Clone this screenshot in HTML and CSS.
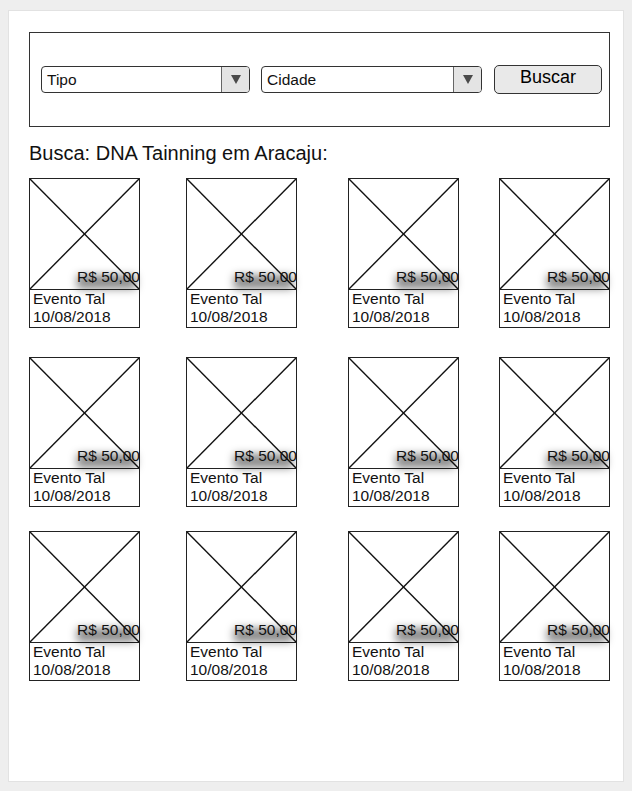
FILE: index.html
```html
<!DOCTYPE html>
<html lang="pt-BR">
<head>
<meta charset="utf-8">
<title>Busca de eventos</title>
<link rel="stylesheet" href="styles.css">
</head>
<body>
<div class="panel">
  <div class="searchbar">
    <div class="select select-tipo"><span class="select-label">Tipo</span><span class="select-arrow"><svg viewBox="0 0 10 9" width="10" height="9"><polygon points="0,0 10,0 5,9"/></svg></span></div>
    <div class="select select-cidade"><span class="select-label">Cidade</span><span class="select-arrow"><svg viewBox="0 0 10 9" width="10" height="9"><polygon points="0,0 10,0 5,9"/></svg></span></div>
    <button class="btn">Buscar</button>
  </div>
  <h1 class="title">Busca: DNA Tainning em Aracaju:</h1>
  <div class="grid">
    <div class="card"><div class="thumb"><svg class="x" viewBox="0 0 100 100" preserveAspectRatio="none"><line x1="0" y1="0" x2="100" y2="100"/><line x1="100" y1="0" x2="0" y2="100"/></svg><span class="price">R$ 50,00</span></div><div class="caption">Evento Tal<br>10/08/2018</div></div>
    <div class="card"><div class="thumb"><svg class="x" viewBox="0 0 100 100" preserveAspectRatio="none"><line x1="0" y1="0" x2="100" y2="100"/><line x1="100" y1="0" x2="0" y2="100"/></svg><span class="price">R$ 50,00</span></div><div class="caption">Evento Tal<br>10/08/2018</div></div>
    <div class="card"><div class="thumb"><svg class="x" viewBox="0 0 100 100" preserveAspectRatio="none"><line x1="0" y1="0" x2="100" y2="100"/><line x1="100" y1="0" x2="0" y2="100"/></svg><span class="price">R$ 50,00</span></div><div class="caption">Evento Tal<br>10/08/2018</div></div>
    <div class="card"><div class="thumb"><svg class="x" viewBox="0 0 100 100" preserveAspectRatio="none"><line x1="0" y1="0" x2="100" y2="100"/><line x1="100" y1="0" x2="0" y2="100"/></svg><span class="price">R$ 50,00</span></div><div class="caption">Evento Tal<br>10/08/2018</div></div>
    <div class="card"><div class="thumb"><svg class="x" viewBox="0 0 100 100" preserveAspectRatio="none"><line x1="0" y1="0" x2="100" y2="100"/><line x1="100" y1="0" x2="0" y2="100"/></svg><span class="price">R$ 50,00</span></div><div class="caption">Evento Tal<br>10/08/2018</div></div>
    <div class="card"><div class="thumb"><svg class="x" viewBox="0 0 100 100" preserveAspectRatio="none"><line x1="0" y1="0" x2="100" y2="100"/><line x1="100" y1="0" x2="0" y2="100"/></svg><span class="price">R$ 50,00</span></div><div class="caption">Evento Tal<br>10/08/2018</div></div>
    <div class="card"><div class="thumb"><svg class="x" viewBox="0 0 100 100" preserveAspectRatio="none"><line x1="0" y1="0" x2="100" y2="100"/><line x1="100" y1="0" x2="0" y2="100"/></svg><span class="price">R$ 50,00</span></div><div class="caption">Evento Tal<br>10/08/2018</div></div>
    <div class="card"><div class="thumb"><svg class="x" viewBox="0 0 100 100" preserveAspectRatio="none"><line x1="0" y1="0" x2="100" y2="100"/><line x1="100" y1="0" x2="0" y2="100"/></svg><span class="price">R$ 50,00</span></div><div class="caption">Evento Tal<br>10/08/2018</div></div>
    <div class="card"><div class="thumb"><svg class="x" viewBox="0 0 100 100" preserveAspectRatio="none"><line x1="0" y1="0" x2="100" y2="100"/><line x1="100" y1="0" x2="0" y2="100"/></svg><span class="price">R$ 50,00</span></div><div class="caption">Evento Tal<br>10/08/2018</div></div>
    <div class="card"><div class="thumb"><svg class="x" viewBox="0 0 100 100" preserveAspectRatio="none"><line x1="0" y1="0" x2="100" y2="100"/><line x1="100" y1="0" x2="0" y2="100"/></svg><span class="price">R$ 50,00</span></div><div class="caption">Evento Tal<br>10/08/2018</div></div>
    <div class="card"><div class="thumb"><svg class="x" viewBox="0 0 100 100" preserveAspectRatio="none"><line x1="0" y1="0" x2="100" y2="100"/><line x1="100" y1="0" x2="0" y2="100"/></svg><span class="price">R$ 50,00</span></div><div class="caption">Evento Tal<br>10/08/2018</div></div>
    <div class="card"><div class="thumb"><svg class="x" viewBox="0 0 100 100" preserveAspectRatio="none"><line x1="0" y1="0" x2="100" y2="100"/><line x1="100" y1="0" x2="0" y2="100"/></svg><span class="price">R$ 50,00</span></div><div class="caption">Evento Tal<br>10/08/2018</div></div>
  </div>
</div>
</body>
</html>
```

FILE: styles.css
```css
* { box-sizing: border-box; }
html, body { margin: 0; padding: 0; }
body {
  background: #eeeeee;
  font-family: "Liberation Sans", Arial, sans-serif;
  color: #111;
}
.panel {
  margin: 10px 8px 0 8px;
  height: 772px;
  background: #fff;
  border: 1px solid #e2e2e2;
  padding: 21px 14px 0 20px;
}
.searchbar {
  width: 581px;
  height: 95px;
  border: 1px solid #333;
  display: flex;
  align-items: center;
  padding: 0 0 0 11px;
}
.select {
  height: 27px;
  border: 1px solid #333;
  border-radius: 4px;
  display: flex;
  overflow: hidden;
  background: #fff;
}
.select-tipo { width: 209px; margin-right: 11px; }
.select-cidade { width: 221px; margin-right: 12px; }
.select-label {
  flex: 1;
  font-size: 15.5px;
  line-height: 25px;
  padding-left: 5px;
  color: #111;
}
.select-arrow {
  width: 28px;
  background: #e4e4e4;
  border-left: 1px solid #666;
  display: flex;
  align-items: center;
  justify-content: center;
}
.select-arrow svg { display: block; fill: #4a4a4a; }
.btn {
  width: 108px;
  height: 29px;
  border: 1px solid #333;
  border-radius: 5px;
  background: #e9e9e9;
  font-family: "Liberation Sans", Arial, sans-serif;
  font-size: 18px;
  color: #000;
  padding: 0 0 4px 0;
  margin: 0;
}
.title {
  font-size: 20px;
  font-weight: normal;
  margin: 15px 0 0 0;
  line-height: 22px;
  height: 36px;
}
.grid {
  display: grid;
  grid-template-columns: 157px 162px 151px 111px;
  grid-template-rows: 179px 174px auto;
}
.card {
  width: 111px;
  align-self: start;
}
.thumb {
  position: relative;
  height: 112px;
  border: 1px solid #222;
}
.x {
  display: block;
  width: 100%;
  height: 100%;
}
.x line {
  stroke: #111;
  stroke-width: 1.4;
  vector-effect: non-scaling-stroke;
}
.price {
  position: absolute;
  right: -1px;
  bottom: 4px;
  font-size: 15.5px;
  line-height: 16px;
  padding-left: 2px;
  color: #111;
  z-index: 1;
}
.price::before {
  content: "";
  position: absolute;
  left: 2px;
  right: 4px;
  top: 6px;
  bottom: -4px;
  background: rgba(0, 0, 0, 0.45);
  filter: blur(4px);
  z-index: -1;
}
.caption {
  height: 38px;
  border: 1px solid #222;
  border-top: none;
  font-size: 15.5px;
  line-height: 18px;
  padding: 0 0 0 3px;
  color: #111;
}
```
